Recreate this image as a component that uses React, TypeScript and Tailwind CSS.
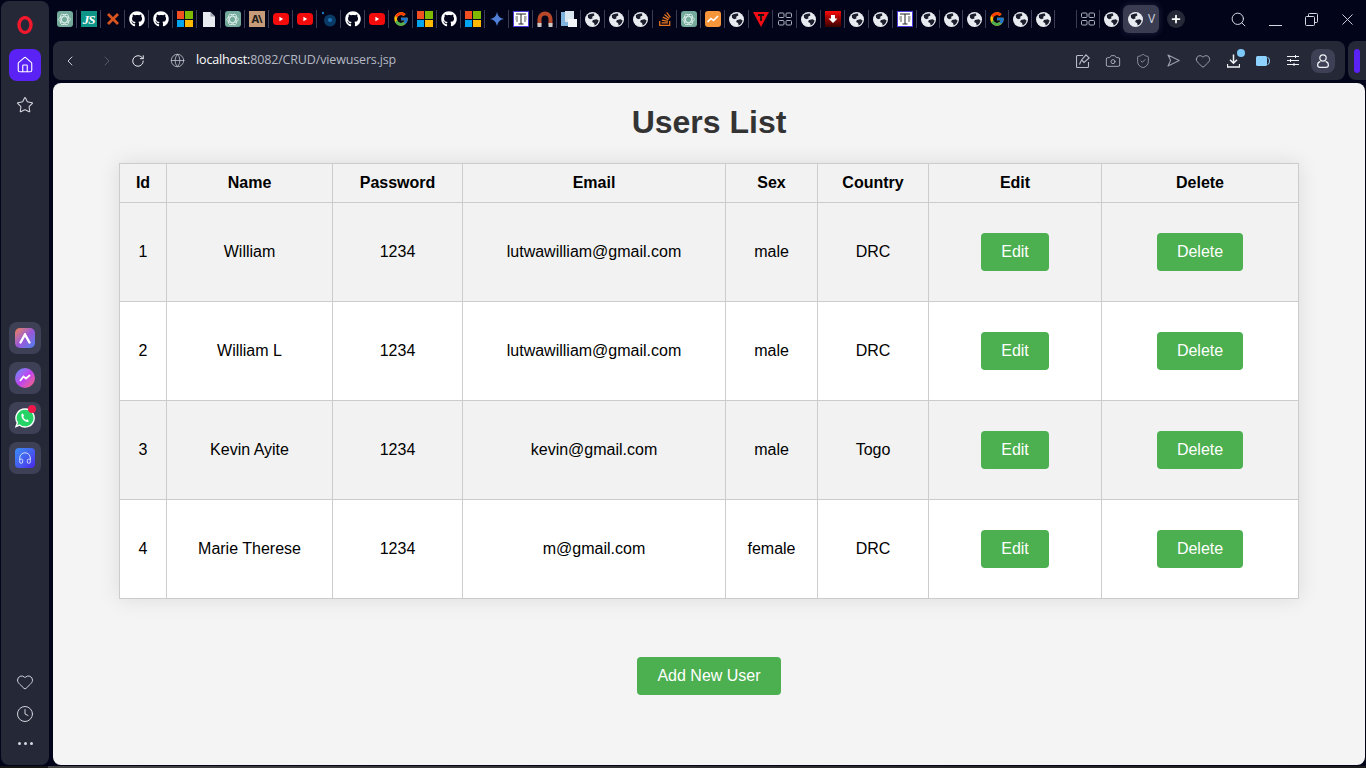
import { Home, Star, Heart, Clock, ChevronLeft, ChevronRight, RotateCw, Globe, Search, X, Camera, ShieldCheck, Plus, Headphones } from 'lucide-react';
import { FaGithub, FaStackOverflow } from 'react-icons/fa';
import { FcGoogle } from 'react-icons/fc';
import type { ReactNode } from 'react';

const SANS = 'font-["Liberation_Sans",Arial,sans-serif]';

const USERS = [
  { id: 1, name: 'William', password: '1234', email: 'lutwawilliam@gmail.com', sex: 'male', country: 'DRC' },
  { id: 2, name: 'William L', password: '1234', email: 'lutwawilliam@gmail.com', sex: 'male', country: 'DRC' },
  { id: 3, name: 'Kevin Ayite', password: '1234', email: 'kevin@gmail.com', sex: 'male', country: 'Togo' },
  { id: 4, name: 'Marie Therese', password: '1234', email: 'm@gmail.com', sex: 'female', country: 'DRC' },
];

const HEADERS = ['Id', 'Name', 'Password', 'Email', 'Sex', 'Country', 'Edit', 'Delete'];

function GlobeFav() {
  return (
    <svg width="15" height="15" viewBox="0 0 16 16">
      <circle cx="8" cy="8" r="8" fill="#e8ebf0" />
      <path d="M3 3.2 Q6 1 9.5 1.6 L10 3.8 L7.6 5 L8 7 L5.4 7.6 L3.2 6 Z" fill="#1b1e2c" />
      <path d="M8.4 8.6 L12.6 7.6 L14.6 9.4 Q13.6 13 10.4 14.4 L9.6 11.6 L7.6 10.6 Z" fill="#1b1e2c" />
    </svg>
  );
}

function Gpt() {
  return (
    <span className="flex h-4 w-4 items-center justify-center rounded-[3px] bg-[#74aa9c]">
      <svg width="13" height="13" viewBox="0 0 12 12" fill="none" stroke="#dff0ea" strokeWidth="0.8">
        <ellipse cx="6" cy="6" rx="5.4" ry="2.8" />
        <ellipse cx="6" cy="6" rx="5.4" ry="2.8" transform="rotate(60 6 6)" />
        <ellipse cx="6" cy="6" rx="5.4" ry="2.8" transform="rotate(120 6 6)" />
      </svg>
    </span>
  );
}

function Microsoft() {
  return (
    <span className="grid h-4 w-4 grid-cols-2 gap-px">
      <span className="bg-[#f25022]" />
      <span className="bg-[#7fba00]" />
      <span className="bg-[#00a4ef]" />
      <span className="bg-[#ffb900]" />
    </span>
  );
}

function Youtube() {
  return (
    <svg width="16" height="12" viewBox="0 0 16 12">
      <rect width="16" height="12" rx="3.5" fill="#f40c0c" />
      <path d="M6.4 3.8 L10.2 6 L6.4 8.2 Z" fill="#fff" />
    </svg>
  );
}

function ScalesDoc() {
  return (
    <svg width="16" height="16" viewBox="0 0 16 16">
      <rect x="0.5" y="0.5" width="15" height="15" fill="#fff" stroke="#4a3be0" />
      <path d="M3 3 H13 M8 3 V13 M5.5 13 H10.5" stroke="#222" fill="none" />
      <path d="M2.5 6 H5 M2.5 8 H5 M3 10 H5 M11 6 H13.5 M11 8 H13.5 M11 10 H13" stroke="#555" fill="none" />
    </svg>
  );
}

function Grid2x2({ size = 14 }: { size?: number }) {
  return (
    <svg width={size} height={size} viewBox="0 0 14 14" fill="none" stroke="#aab0bd" strokeWidth="1">
      <rect x="0.5" y="1" width="5.5" height="4.5" rx="1" />
      <rect x="8" y="1" width="5.5" height="4.5" rx="1" />
      <rect x="0.5" y="8.5" width="5.5" height="4.5" rx="1" />
      <rect x="8" y="8.5" width="5.5" height="4.5" rx="1" />
    </svg>
  );
}

const gh = <FaGithub size={16} color="#fff" />;
const gl = <FcGoogle size={16} />;
const ms = <Microsoft />;
const gpt = <Gpt />;
const yt = <Youtube />;
const web = <GlobeFav />;
const ts = <ScalesDoc />;

const FAVICONS: ReactNode[] = [
  gpt,
  <span className="flex h-4 w-4 items-center justify-center bg-[#0f9488] font-['Liberation_Serif',serif] text-[13px] font-bold italic leading-none tracking-[-1px] text-white">JS</span>,
  <svg width="12" height="12" viewBox="0 0 12 12" stroke="#d9541e" strokeWidth="2.8"><path d="M1 1 L11 11 M11 1 L1 11" /></svg>,
  gh,
  gh,
  ms,
  <svg width="12" height="15" viewBox="0 0 12 15"><path d="M0 0 H7.5 L12 4.5 V15 H0 Z" fill="#e8ebf0" /><path d="M7.5 0 V4.5 H12 Z" fill="#9aa0ad" /></svg>,
  gpt,
  <span className="flex h-4 w-4 items-center justify-center bg-[#c79b78] text-[11px] font-bold tracking-[-1px] text-[#1a1a1a]">A\</span>,
  yt,
  yt,
  <svg width="16" height="16" viewBox="0 0 16 16"><circle cx="9" cy="9.5" r="6" fill="#0a3a66" /><circle cx="9" cy="9" r="2" fill="#1f74b8" /><circle cx="2" cy="2" r="1.2" fill="#1f74b8" /></svg>,
  gh,
  yt,
  gl,
  ms,
  gh,
  ms,
  <svg width="16" height="16" viewBox="0 0 16 16"><path d="M8 1 Q9 7 15 8 Q9 9 8 15 Q7 9 1 8 Q7 7 8 1 Z" fill="#4f7fd8" /></svg>,
  ts,
  <svg width="16" height="16" viewBox="0 0 16 16" fill="none"><path d="M2.5 14 V8 A5.5 5.5 0 0 1 13.5 8 V14" stroke="#b8482a" strokeWidth="4" /><path d="M0.5 12 H4.5 V16 H0.5 Z M11.5 12 H15.5 V16 H11.5 Z" fill="#c9c9c9" /></svg>,
  <svg width="16" height="16" viewBox="0 0 16 16"><rect y="1" width="10" height="14" fill="#7fb2dc" /><rect x="4" y="0" width="9" height="11" fill="#dce6f0" /><rect x="7" y="8" width="9" height="8" fill="#f1f3f6" /></svg>,
  web,
  web,
  web,
  <FaStackOverflow size={16} color="#e8761f" />,
  gpt,
  <span className="flex h-4 w-4 items-center justify-center rounded-[3px] bg-[#f7953a]">
    <svg width="12" height="8" viewBox="0 0 12 8" fill="none" stroke="#fff" strokeWidth="1.6"><path d="M0.5 7 L4 3.5 L6.5 5.5 L11 1" /></svg>
  </span>,
  web,
  <svg width="16" height="16" viewBox="0 0 16 16"><path d="M0 1 H16 L8 16 Z" fill="#f00c14" /><path d="M5 4 H11 M8 4 V10" stroke="#111" strokeWidth="1.8" /></svg>,
  <Grid2x2 />,
  web,
  <span className="flex h-4 w-4 items-center justify-center bg-gradient-to-b from-[#ff0a0a] to-[#3a0000]">
    <svg width="10" height="10" viewBox="0 0 10 10"><path d="M3 1 H7 V4.5 H9.5 L5 9 L0.5 4.5 H3 Z" fill="#fff" /></svg>
  </span>,
  web,
  web,
  ts,
];

const TAIL_FAVICONS: ReactNode[] = [web, web, web, gl, web, web];

function Cell({ children, width = 'w-6' }: { children: ReactNode; width?: string }) {
  return (
    <div className={`flex h-[18px] shrink-0 items-center justify-center border-r border-[#3a3d55] ${width}`}>
      {children}
    </div>
  );
}

function TabStrip() {
  return (
    <div className="flex h-[41px] items-center pb-[3px] text-[#e8ebf0]">
      {FAVICONS.map((icon, i) => (
        <Cell key={i}>{icon}</Cell>
      ))}
      {TAIL_FAVICONS.map((icon, i) => (
        <Cell key={i} width="w-[23px]">{icon}</Cell>
      ))}
      <div className="h-[18px] w-[22px] shrink-0 border-r border-[#3a3d55]" />
      <Cell width="w-[23px]"><Grid2x2 /></Cell>
      <div className="flex w-[23px] shrink-0 items-center justify-center"><GlobeFav /></div>
      <div className="flex h-7 w-9 shrink-0 items-center gap-[5px] rounded-md bg-[#3a3d52] pl-[5px] shadow-[0_0_6px_rgba(90,95,130,0.35)]">
        <GlobeFav />
        <span className="font-['Open_Sans',sans-serif] text-[12px] text-[#d5d8e0]">V</span>
      </div>
      <div className="ml-[8px] flex h-[18px] w-[18px] shrink-0 items-center justify-center rounded-full bg-[#252836]">
        <Plus size={12} strokeWidth={3.5} color="#fff" />
      </div>
      <div className="ml-auto flex items-center text-[#d5d8e0]">
        <div className="mr-[1px] flex w-9 justify-center"><Search size={17} strokeWidth={1.4} /></div>
        <div className="flex w-9 justify-center">
          <svg width="13" height="13" viewBox="0 0 13 13" stroke="currentColor"><path d="M0 12.5 H13" /></svg>
        </div>
        <div className="flex w-9 justify-center">
          <svg width="13" height="13" viewBox="0 0 13 13" fill="none" stroke="currentColor">
            <rect x="0.5" y="3.5" width="9" height="9" rx="1" />
            <path d="M3.5 3.5 V1.5 A1 1 0 0 1 4.5 0.5 H11.5 A1 1 0 0 1 12.5 1.5 V8.5 A1 1 0 0 1 11.5 9.5 H9.5" />
          </svg>
        </div>
        <div className="flex w-[37px] justify-center pr-px"><X size={19} strokeWidth={1.2} /></div>
      </div>
    </div>
  );
}

function AddressBar() {
  const icon = 'flex w-[30px] justify-center text-[#b8bcc8]';
  return (
    <div className="flex items-stretch gap-[3px]">
      <div className="flex h-[39px] flex-1 items-center rounded-lg bg-[#252836] pr-[10px]">
        <div className="flex w-[34px] justify-center text-[#c8ccd6]"><ChevronLeft size={16} strokeWidth={1.5} /></div>
        <div className="flex w-[40px] justify-center text-[#565a6b]"><ChevronRight size={16} strokeWidth={1.5} /></div>
        <div className="flex w-[22px] justify-center text-[#e8ebf0]"><RotateCw size={14} strokeWidth={1.7} /></div>
        <div className="ml-[20px] flex w-[16px] justify-center text-[#c8ccd6]"><Globe size={15} strokeWidth={1.2} /></div>
        <div className="ml-[11px] font-['Open_Sans',sans-serif] text-[12.5px] tracking-[-0.15px] text-[#b4b8c4]">
          <span className="text-white">localhost:</span>8082/CRUD/viewusers.jsp
        </div>
        <div className="ml-auto flex items-center">
          <div className={icon}>
            <svg width="14" height="14" viewBox="0 0 14 14" fill="none" stroke="currentColor" strokeWidth="1.1">
              <path d="M7 1.5 H1.5 A1 1 0 0 0 0.5 2.5 V12.5 A1 1 0 0 0 1.5 13.5 H11.5 A1 1 0 0 0 12.5 12.5 V8" />
              <path d="M10 0.8 L13.2 4 L8 8.4 L5.6 6 Z M5.6 6 L3.4 10.6" />
            </svg>
          </div>
          <div className={icon}><Camera size={16} strokeWidth={1.3} /></div>
          <div className="flex w-[30px] justify-center text-[#9a9fad]"><ShieldCheck size={16} strokeWidth={1.3} /></div>
          <div className="flex w-[30px] justify-center text-[#9a9fad]">
            <svg width="13" height="13" viewBox="0 0 13 13" fill="none" stroke="currentColor" strokeWidth="1.1" strokeLinejoin="round">
              <path d="M1 1 L12.2 6.5 L1 12 L3.6 6.5 Z" />
            </svg>
          </div>
          <div className={icon}><Heart size={16} strokeWidth={1.2} /></div>
          <div className="relative flex w-[30px] justify-center text-[#f0f2f6]">
            <svg width="13" height="14" viewBox="0 0 13 14" fill="none" stroke="currentColor" strokeWidth="1.3">
              <path d="M6.5 0.5 V9 M3 5.8 L6.5 9.2 L10 5.8" strokeWidth="1.5" />
              <path d="M0.5 10 V13 H12.5 V10" />
            </svg>
            <span className="absolute -top-[5px] right-[3px] h-2 w-2 rounded-full bg-[#7cc8f8]" />
          </div>
          <div className="flex w-[30px] justify-center">
            <svg width="14" height="10" viewBox="0 0 14 10">
              <rect width="11" height="10" rx="1.5" fill="#8ed2ff" />
              <path d="M11.5 1.5 Q13.5 1.5 13.5 5 Q13.5 8.5 11.5 8.5" fill="none" stroke="#8ed2ff" />
            </svg>
          </div>
          <div className="flex w-[30px] justify-center text-[#f0f2f6]">
            <svg width="12" height="11" viewBox="0 0 12 11" stroke="currentColor">
              <path d="M0 1.5 H12 M0 5.5 H12 M0 9.5 H12" />
              <path d="M8.5 0 V3 M3.5 4 V7 M7 8 V11" />
            </svg>
          </div>
          <div className="ml-[3px] flex h-6 w-6 items-center justify-center rounded-lg bg-[#3e4156] text-[#f0f2f6]">
            <svg width="12" height="14" viewBox="0 0 12 14" fill="none" stroke="currentColor" strokeWidth="1.2">
              <circle cx="6" cy="4" r="3.2" />
              <path d="M3.4 7.4 Q0.6 8.4 0.6 11 Q0.6 13.4 3 13.4 H9 Q11.4 13.4 11.4 11 Q11.4 8.4 8.6 7.4" />
            </svg>
          </div>
        </div>
      </div>
      <div className="flex w-[18px] items-center justify-center rounded-l-lg bg-[#252836]">
        <span className="h-6 w-[6px] rounded-full bg-[#5a22f5]" />
      </div>
    </div>
  );
}

function AppTile({ children }: { children: ReactNode }) {
  return (
    <div className="relative flex h-8 w-8 items-center justify-center rounded-lg bg-[#3e4156]">{children}</div>
  );
}

function Sidebar() {
  return (
    <aside className="mb-px ml-px mt-px flex w-12 shrink-0 flex-col items-center rounded-lg bg-[#252836]">
      <svg className="mt-[15px]" width="16" height="18" viewBox="0 0 16 18" fill="none">
        <ellipse cx="8" cy="9" rx="6" ry="7.4" stroke="#f0182d" strokeWidth="3.4" />
      </svg>
      <div className="mt-[15px] flex h-8 w-8 items-center justify-center rounded-lg bg-[#5a22f5] text-white">
        <Home size={18} strokeWidth={1.5} />
      </div>
      <Star size={18} strokeWidth={1.4} className="mt-[15px] text-[#d5d8e0]" />
      <div className="mt-[208px] flex flex-col gap-2">
        <AppTile>
          <span className="flex h-5 w-5 items-center justify-center rounded-[5px] bg-gradient-to-br from-[#f47b3c] via-[#9a55d8] to-[#3a7ff0]">
            <svg width="12" height="11" viewBox="0 0 12 11" fill="none" stroke="#fff" strokeWidth="2.4" strokeLinecap="round"><path d="M1.5 9.5 L6 1.5 L10.5 9.5" /></svg>
          </span>
        </AppTile>
        <AppTile>
          <span className="flex h-5 w-5 items-center justify-center rounded-full bg-gradient-to-br from-[#3d8bf5] via-[#c03ff0] to-[#ff5a6a]">
            <svg width="12" height="8" viewBox="0 0 12 8" fill="none" stroke="#fff" strokeWidth="1.8"><path d="M1 7 L4.5 2.5 L7 4.5 L11 1" /></svg>
          </span>
        </AppTile>
        <AppTile>
          <svg width="20" height="20" viewBox="0 0 20 20">
            <path d="M10 1 A9 9 0 1 1 4.5 17 L1 18.6 L2.4 14.8 A9 9 0 0 1 10 1 Z" fill="#25d366" stroke="#fff" strokeWidth="1.4" />
            <path d="M6.5 6 Q6 10 9 12.6 Q11.5 14.6 14 13.6 L12.4 11.2 L11 12 Q9 11 8.2 8.8 L9 7.8 L7.8 5.4 Z" fill="#fff" />
          </svg>
          <span className="absolute right-[5px] top-[3px] h-2 w-2 rounded-full bg-[#f0184a]" />
        </AppTile>
        <AppTile>
          <span className="flex h-5 w-5 items-center justify-center rounded-[4px] bg-gradient-to-br from-[#3a8cf5] to-[#4a1de8] text-[#dfe6ff]">
            <Headphones size={14} strokeWidth={1.5} />
          </span>
        </AppTile>
      </div>
      <div className="mt-auto flex flex-col items-center text-[#d5d8e0]">
        <Heart size={18} strokeWidth={1.3} />
        <Clock size={18} strokeWidth={1.3} className="mt-[14px]" />
        <div className="mb-5 mt-[19px] flex gap-[3px]">
          <span className="h-[3px] w-[3px] rounded-full bg-[#d5d8e0]" />
          <span className="h-[3px] w-[3px] rounded-full bg-[#d5d8e0]" />
          <span className="h-[3px] w-[3px] rounded-full bg-[#d5d8e0]" />
        </div>
      </div>
    </aside>
  );
}

function GreenButton({ label, width }: { label: string; width: string }) {
  return (
    <button className={`h-[38px] rounded-[4px] bg-[#4caf50] text-base text-white ${width}`}>{label}</button>
  );
}

function UsersTable() {
  const border = 'border border-[#cccccc]';
  return (
    <table className="w-[1179px] table-fixed border-collapse shadow-[0_0_20px_rgba(0,0,0,0.1)]">
      <colgroup>
        <col className="w-[47px]" />
        <col className="w-[166px]" />
        <col className="w-[130px]" />
        <col className="w-[263px]" />
        <col className="w-[92px]" />
        <col className="w-[111px]" />
        <col className="w-[173px]" />
        <col className="w-[197px]" />
      </colgroup>
      <thead>
        <tr className="h-[39px] bg-[#f2f2f2]">
          {HEADERS.map((h) => (
            <th key={h} className={`${border} p-0 text-center text-base font-bold text-black`}>{h}</th>
          ))}
        </tr>
      </thead>
      <tbody>
        {USERS.map((u, i) => (
          <tr key={u.id} className={`h-[99px] ${i % 2 === 0 ? 'bg-[#f2f2f2]' : 'bg-white'}`}>
            <td className={`${border} p-0 text-center text-black`}>{u.id}</td>
            <td className={`${border} p-0 text-center text-black`}>{u.name}</td>
            <td className={`${border} p-0 text-center text-black`}>{u.password}</td>
            <td className={`${border} p-0 text-center text-black`}>{u.email}</td>
            <td className={`${border} p-0 text-center text-black`}>{u.sex}</td>
            <td className={`${border} p-0 text-center text-black`}>{u.country}</td>
            <td className={`${border} p-0 text-center`}><GreenButton label="Edit" width="w-[68px]" /></td>
            <td className={`${border} p-0 text-center`}><GreenButton label="Delete" width="w-[86px]" /></td>
          </tr>
        ))}
      </tbody>
    </table>
  );
}

export default function App() {
  return (
    <div className="flex h-screen w-full flex-col overflow-hidden bg-[#02051a]">
      <div className="flex min-h-0 flex-1">
        <Sidebar />
        <div className="ml-1 flex min-w-0 flex-1 flex-col">
          <TabStrip />
          <AddressBar />
          <main className={`mb-px mr-px mt-[3px] flex flex-1 flex-col items-center rounded-lg bg-[#f4f4f4] ${SANS}`}>
            <h1 className="mt-[21px] text-[32px] font-bold leading-[37px] text-[#333333]">Users List</h1>
            <div className="mt-[22px]"><UsersTable /></div>
            <div className="mt-[58px]"><GreenButton label="Add New User" width="w-[144px]" /></div>
          </main>
        </div>
      </div>
      <div className="flex h-[2px] shrink-0">
        <div className="w-12 bg-[#161616]" />
        <div className="flex-1 bg-gradient-to-r from-[#444444] to-[#1c1c1c]" />
      </div>
    </div>
  );
}
